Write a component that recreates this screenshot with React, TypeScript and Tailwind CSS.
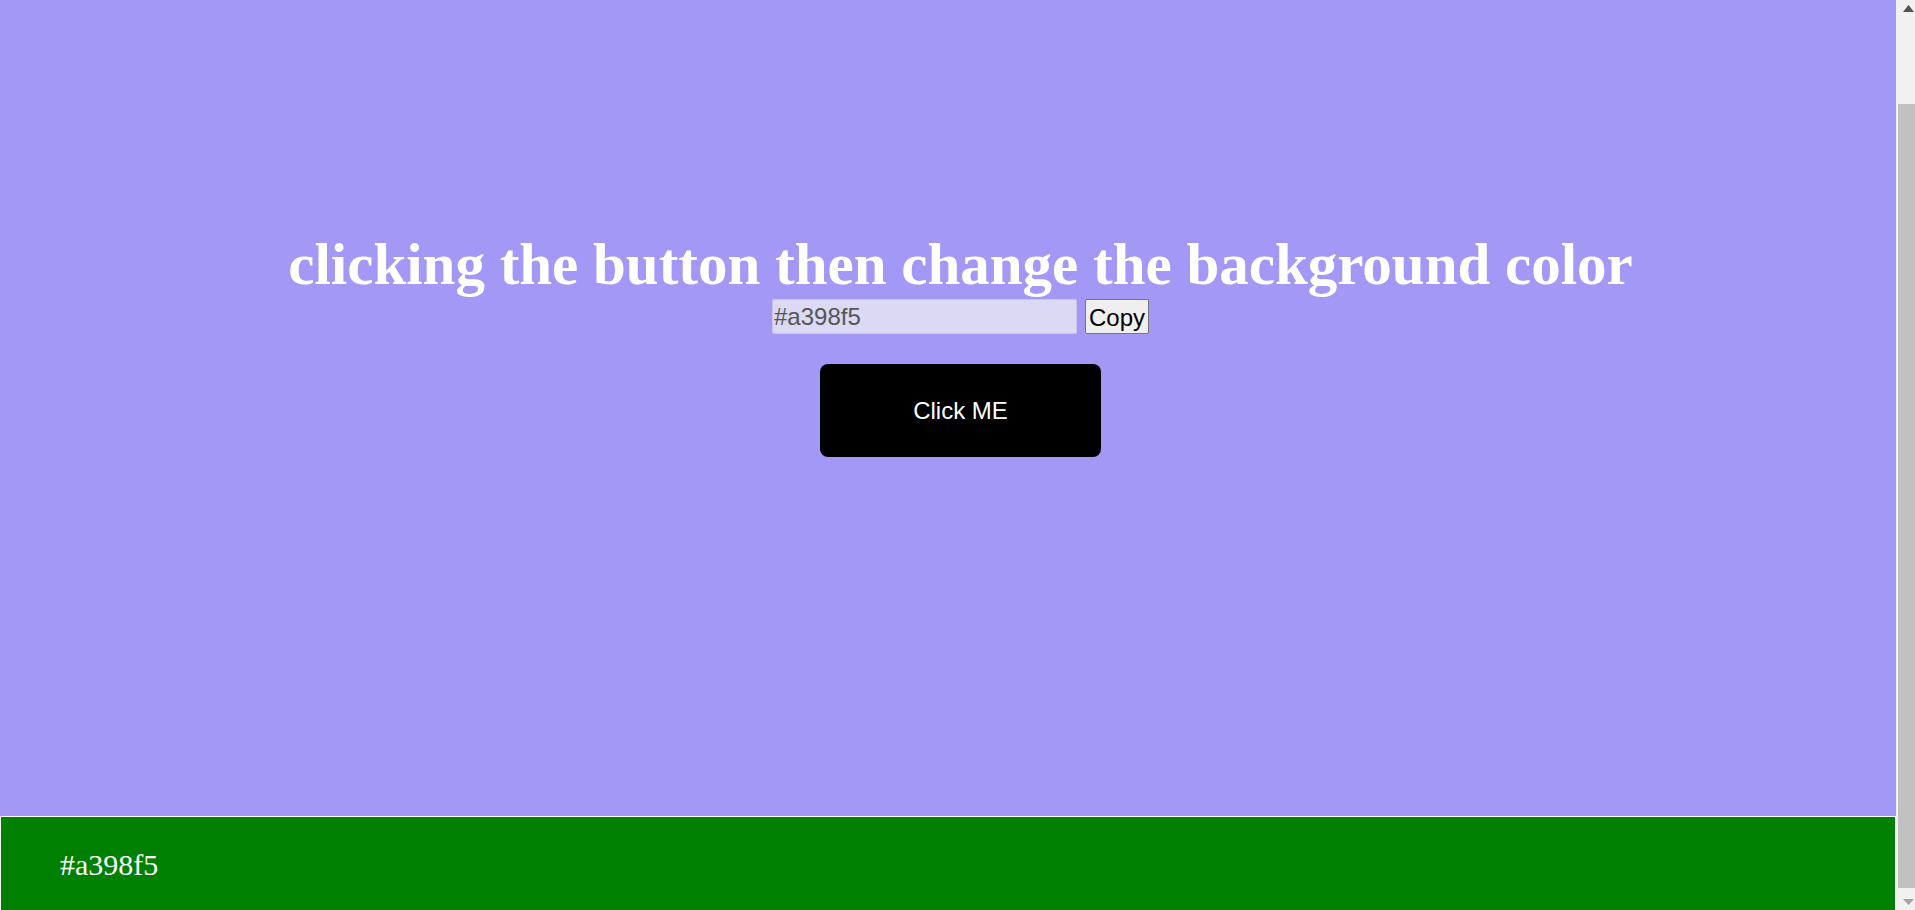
const COLOR = '#a398f5';

function Scrollbar() {
  return (
    <div className="flex h-full w-[19px] shrink-0 flex-col bg-[#f1f1f1]">
      <div className="flex h-[17px] shrink-0 items-center justify-end pr-[1px]">
        <svg width="11" height="7" viewBox="0 0 11 7">
          <path d="M0 7 L5.5 0 L11 7 Z" fill="#505050" />
        </svg>
      </div>
      <div className="flex flex-1 flex-col pl-[2px] pt-[87px] pb-[5px]">
        <div className="flex-1 bg-[#c1c1c1]" />
      </div>
      <div className="flex h-[17px] shrink-0 items-center justify-end pr-[1px]">
        <svg width="11" height="6" viewBox="0 0 11 6">
          <path d="M0 0 L5.5 6 L11 0 Z" fill="#a3a3a3" />
        </svg>
      </div>
    </div>
  );
}

export default function App() {
  return (
    <div className="flex h-[910px] overflow-hidden bg-[#a398f5] font-['Liberation_Serif',serif]">
      <div className="flex min-w-0 flex-1 flex-col">
        <main className="flex h-[816px] shrink-0 flex-col items-center pl-[25px] pt-[230px]">
          <h1 className="whitespace-nowrap text-[59px] font-bold leading-[69px] text-white">
            clicking the button then change the background color
          </h1>
          <div className="flex items-center gap-2 font-['Liberation_Sans',sans-serif]">
            <input
              readOnly
              value={COLOR}
              className="h-[35px] w-[305px] rounded-[2px] border border-[#c9c3ee] bg-[#dcd9f4] px-[1px] text-[24px] text-[#555] outline-none"
            />
            <button
              type="button"
              className="h-[35px] w-[64px] rounded-[2px] border border-[#767676] bg-[#efefef] text-[24px] text-black"
            >
              Copy
            </button>
          </div>
          <button
            type="button"
            className="mt-[30px] h-[93px] w-[281px] rounded-lg bg-black font-['Liberation_Sans',sans-serif] text-[24px] text-white"
          >
            Click ME
          </button>
        </main>
        <footer className="flex-1 border border-b-0 border-white bg-[#008000] pl-[59px] pt-[31px] text-[30px] leading-[34px] text-white">
          {COLOR}
        </footer>
      </div>
      <Scrollbar />
    </div>
  );
}
